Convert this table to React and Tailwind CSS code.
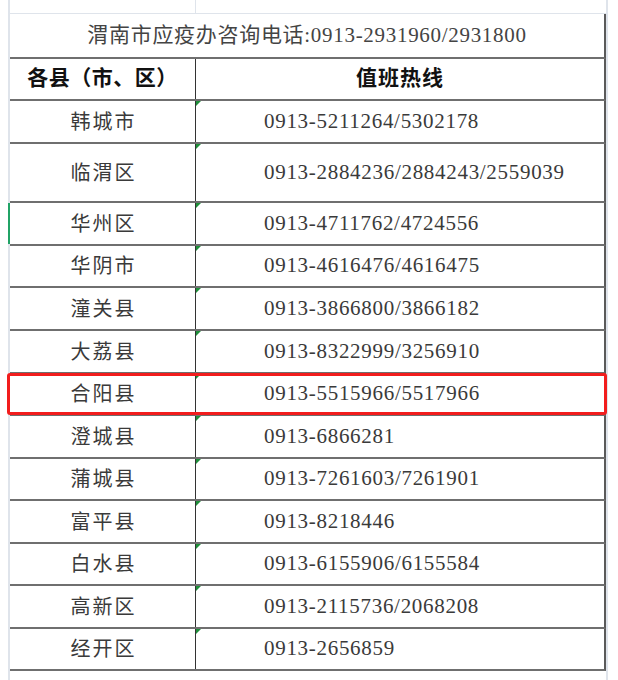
import React from 'react';

const rows = [
    { name: '韩城市', tel: '0913-5211264/5302178', h: 'h-[43px]' },
    { name: '临渭区', tel: '0913-2884236/2884243/2559039', h: 'h-[59px]' },
    { name: '华州区', tel: '0913-4711762/4724556', h: 'h-[43px]', selected: true },
    { name: '华阴市', tel: '0913-4616476/4616475', h: 'h-[42px]' },
    { name: '潼关县', tel: '0913-3866800/3866182', h: 'h-[43px]' },
    { name: '大荔县', tel: '0913-8322999/3256910', h: 'h-[43px]' },
    { name: '合阳县', tel: '0913-5515966/5517966', h: 'h-[42px]', marked: true },
    { name: '澄城县', tel: '0913-6866281', h: 'h-[43px]' },
    { name: '蒲城县', tel: '0913-7261603/7261901', h: 'h-[42px]' },
    { name: '富平县', tel: '0913-8218446', h: 'h-[43px]' },
    { name: '白水县', tel: '0913-6155906/6155584', h: 'h-[42px]' },
    { name: '高新区', tel: '0913-2115736/2068208', h: 'h-[43px]' },
    { name: '经开区', tel: '0913-2656859', h: 'h-[42px]' },
];

const font = "font-['Liberation_Serif','Noto_Sans_CJK_SC',serif]";

export default function App() {
    return (
        <div className={`w-[618px] h-[680px] bg-white overflow-hidden pl-[8px] ${font} text-[#3a3a3a]`}>
            <div className="flex w-[602px]">
                <div className="w-[2px] h-[680px] bg-[#dfe4eb] shrink-0"></div>
                <div className="w-[596px] shrink-0">
                    {/* partial row above */}
                    <div className="h-[14px] border-b border-[#dfe4eb] grid grid-cols-[186px_1fr]">
                        <div className="border-r border-[#dfe4eb]"></div>
                        <div></div>
                    </div>

                    {/* title */}
                    <div className="h-[45px] border-b-2 border-r-2 border-b-[#6f6f6f] border-r-[#5a5a5a] flex items-center justify-center text-[21px] tracking-[0.7px] text-[#444]">
                        渭南市应疫办咨询电话:0913-2931960/2931800
                    </div>

                    {/* header */}
                    <div className="h-[42px] grid grid-cols-[186px_1fr] border-b-2 border-r-2 border-b-[#6f6f6f] border-r-[#5a5a5a] text-[21px] font-bold text-[#111]">
                        <div className="flex items-center justify-center border-r border-[#333] tracking-[0.5px]">各县（市、区）</div>
                        <div className="flex items-center justify-center tracking-[1px]">值班热线</div>
                    </div>

                    {rows.map((r) => (
                        <div
                            key={r.name}
                            className={`relative ${r.h} grid grid-cols-[186px_1fr] border-b-2 border-r-2 border-b-[#6f6f6f] border-r-[#5a5a5a] text-[21px]`}
                        >
                            <div className="flex items-center justify-center border-r border-[#333] tracking-[2px] pl-[2px] text-[20px]">
                                {r.name}
                            </div>
                            <div className="relative flex items-center pl-[68px] tracking-[0.7px]">
                                <span className="absolute left-0 top-0 w-0 h-0 border-t-[5px] border-r-[5px] border-t-[#1f8f3a] border-r-transparent"></span>
                                {r.tel}
                            </div>
                            {r.selected && (
                                <span className="absolute -left-[2px] top-0 bottom-0 w-[2px] bg-[#21a366]"></span>
                            )}
                            {r.marked && (
                                <span className="absolute -left-[3px] -right-[3px] -top-[1px] -bottom-[1px] border-[3px] border-[#f21d1d] rounded-[3px]"></span>
                            )}
                        </div>
                    ))}
                </div>
                <div className="w-[2px] h-[680px] bg-[#dfe4eb] shrink-0"></div>
            </div>
        </div>
    );
}
